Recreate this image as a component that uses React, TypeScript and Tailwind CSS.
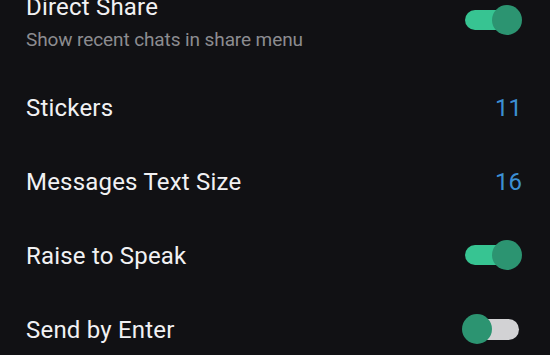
function Toggle({ on }: { on: boolean }) {
  return (
    <div className="relative h-[30px] w-[60px] shrink-0">
      <div
        className={
          on
            ? "absolute left-[3px] right-[3px] top-[5px] h-[20px] rounded-full bg-[#37c492]"
            : "absolute left-[3px] right-[3px] top-[5px] h-[21px] rounded-full bg-[#d2d2d4]"
        }
      />
      <div
        className={
          on
            ? "absolute right-0 top-0 h-[30px] w-[30px] rounded-full bg-[#2c9471]"
            : "absolute left-0 top-0 h-[30px] w-[30px] rounded-full bg-[#2c9471]"
        }
      />
    </div>
  );
}

function Row({ label, value, toggle }: { label: string; value?: string; toggle?: boolean }) {
  return (
    <div className="flex h-[74px] items-center justify-between">
      <span className="pt-[1px] text-[24px] leading-[28px] tracking-[0.2px] text-[#f1f1f3]">{label}</span>
      {value && <span className="pt-[1px] text-[24px] leading-[28px] text-[#3c8fd3]">{value}</span>}
      {toggle !== undefined && <Toggle on={toggle} />}
    </div>
  );
}

export default function App() {
  return (
    <div
      className="h-[355px] w-[550px] overflow-hidden bg-[#111114] pl-[26px] pr-[28px]"
      style={{ fontFamily: "Roboto, 'Noto Sans', sans-serif" }}
    >
      <div className="-mt-[7px] flex h-[77px] items-start justify-between">
        <div className="flex flex-col">
          <span className="text-[24px] leading-[28px] tracking-[0.2px] text-[#f1f1f3]">Direct Share</span>
          <span className="mt-[7px] text-[19px] leading-[24px] tracking-[-0.1px] text-[#8c8c90]">
            Show recent chats in share menu
          </span>
        </div>
        <div className="mt-[12px]">
          <Toggle on />
        </div>
      </div>
      <Row label="Stickers" value="11" />
      <Row label="Messages Text Size" value="16" />
      <Row label="Raise to Speak" toggle />
      <Row label="Send by Enter" toggle={false} />
    </div>
  );
}
